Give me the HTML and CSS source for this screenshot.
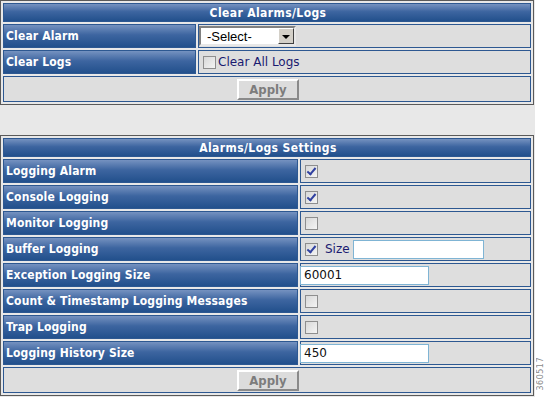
FILE: index.html
```html
<!DOCTYPE html>
<html lang="en">
<head>
	<meta charset="UTF-8">
	<title>Alarms/Logs</title>
	<link rel="stylesheet" href="styles.css">
</head>
<body>
	<div class="page">
		<div class="panel">
			<!-- 清除告警/日志 -->
			<table class="grid grid-clear">
				<tr><th colspan="2" class="title">Clear Alarms/Logs</th></tr>
				<tr>
					<td class="label">Clear Alarm</td>
					<td class="value">
						<span class="select"><span class="select-text">-Select-</span><span class="select-btn"></span></span>
					</td>
				</tr>
				<tr>
					<td class="label">Clear Logs</td>
					<td class="value"><span class="check"></span><span class="opt">Clear All Logs</span></td>
				</tr>
				<tr><td colspan="2" class="value action"><span class="btn">Apply</span></td></tr>
			</table>

			<div class="spacer"></div>

			<!-- 告警/日志设置 -->
			<table class="grid grid-settings">
				<tr><th colspan="2" class="title">Alarms/Logs Settings</th></tr>
				<tr>
					<td class="label">Logging Alarm</td>
					<td class="value"><span class="check on"></span></td>
				</tr>
				<tr>
					<td class="label">Console Logging</td>
					<td class="value"><span class="check on"></span></td>
				</tr>
				<tr>
					<td class="label">Monitor Logging</td>
					<td class="value"><span class="check"></span></td>
				</tr>
				<tr>
					<td class="label">Buffer Logging</td>
					<td class="value"><span class="check on"></span><span class="opt size">Size</span><span class="field field-size"></span></td>
				</tr>
				<tr>
					<td class="label">Exception Logging Size</td>
					<td class="value"><span class="field">60001</span></td>
				</tr>
				<tr>
					<td class="label">Count &amp; Timestamp Logging Messages</td>
					<td class="value"><span class="check"></span></td>
				</tr>
				<tr>
					<td class="label">Trap Logging</td>
					<td class="value"><span class="check"></span></td>
				</tr>
				<tr>
					<td class="label">Logging History Size</td>
					<td class="value"><span class="field">450</span></td>
				</tr>
				<tr><td colspan="2" class="value action"><span class="btn">Apply</span></td></tr>
			</table>
		</div>
		<div class="side"><span class="fig">360517</span></div>
	</div>
</body>
</html>
```

FILE: styles.css
```css
*{
	margin: 0;
	padding: 0;
	box-sizing: border-box;
}
body{
	background: #ffffff;
	font-family: "DejaVu Sans", Verdana, sans-serif;
}
.page{
	width: 546px;
	height: 397px;
	display: flex;
}
.panel{
	width: 535px;
	background: #e8e8e8;
}
.side{
	flex: 1;
	display: flex;
	align-items: flex-end;
	justify-content: center;
	padding-bottom: 6px;
}
/*侧边编号竖排*/
.fig{
	writing-mode: vertical-rl;
	transform: rotate(180deg);
	font-size: 8px;
	color: #8a8a8a;
	letter-spacing: 0.5px;
}
.grid{
	width: 534px;
	border: 1px solid #5a5a5a;
	border-collapse: separate;
	border-spacing: 2px;
	background: #e8e8e8;
}
.grid td,.grid th{
	border: 1px solid #2d5891;
	padding: 0 0 0 2px;
	vertical-align: middle;
}
.title{
	height: 19px;
	color: #ffffff;
	font-family: "DejaVu Sans Condensed", "DejaVu Sans", sans-serif;
	font-stretch: condensed;
	font-size: 12px;
	font-weight: bold;
	letter-spacing: 0.4px;
	text-align: center;
	background: linear-gradient(#7592c0, #3d65a0 45%, #22508c);
	border-color: #3a5f96;
	/*标题略微偏左*/
	padding-right: 22px;
}
.label{
	height: 24px;
	color: #ffffff;
	font-family: "DejaVu Sans Condensed", "DejaVu Sans", sans-serif;
	font-stretch: condensed;
	font-size: 12px;
	font-weight: bold;
	letter-spacing: 0.15px;
	white-space: nowrap;
	background: linear-gradient(#7592c0, #3d65a0 45%, #22508c);
}
.grid-clear .label{
	width: 193px;
}
.grid-settings .label{
	width: 295px;
}
.value{
	height: 24px;
	background: #dedede;
	font-size: 12px;
	padding-left: 4px;
}
.value > span{
	vertical-align: middle;
}
.action{
	height: 26px;
	text-align: center;
	padding: 0;
}
/*下拉框*/
.select{
	display: inline-flex;
	align-items: center;
	width: 97px;
	height: 20px;
	margin-left: -2px;
	background: #ffffff;
	border: 2px solid;
	border-color: #808080 #e8e8e8 #e8e8e8 #808080;
}
.select-text{
	flex: 1;
	padding-left: 6px;
	color: #000000;
	font-size: 13px;
	font-family: "Liberation Sans", Arial, sans-serif;
}
.select-btn{
	width: 16px;
	height: 16px;
	background: #d4d0c8;
	border: 1px solid;
	border-color: #ffffff #404040 #404040 #ffffff;
	position: relative;
}
.select-btn::after{
	content: "";
	position: absolute;
	left: 3px;
	top: 6px;
	border: 4px solid transparent;
	border-top: 4px solid #000000;
	border-bottom: 0;
}
/*复选框*/
.check{
	display: inline-block;
	width: 13px;
	height: 13px;
	border: 1px solid #8e8e8e;
	background: linear-gradient(135deg, #d8d8d8, #f4f4f4);
	margin-left: 2px;
	position: relative;
}
.check.on::after{
	content: "";
	position: absolute;
	left: 3px;
	top: 0px;
	width: 3px;
	height: 7px;
	border: solid #3040a0;
	border-width: 0 2px 2px 0;
	transform: rotate(40deg);
}
.opt{
	color: #1a1a70;
	font-size: 12px;
	font-family: "DejaVu Sans", Verdana, sans-serif;
	margin-left: 2px;
}
.size{
	margin-left: 7px;
	margin-right: 3px;
}
/*输入框*/
.field{
	display: inline-block;
	width: 129px;
	height: 19px;
	margin-left: -3px;
	padding-left: 3px;
	line-height: 17px;
	background: #ffffff;
	border: 1px solid #7fb4d4;
	color: #101010;
	font-size: 12px;
}
.field-size{
	width: 131px;
	margin-left: 0;
}
/*按钮*/
.btn{
	display: inline-block;
	width: 62px;
	height: 21px;
	line-height: 17px;
	background: #dcdcdc;
	border: 2px solid;
	border-color: #ffffff #8a8a8a #8a8a8a #ffffff;
	color: #7c7c7c;
	font-family: "DejaVu Sans Condensed", "DejaVu Sans", sans-serif;
	font-stretch: condensed;
	font-size: 13px;
	font-weight: bold;
}
.spacer{
	height: 30px;
}
```
